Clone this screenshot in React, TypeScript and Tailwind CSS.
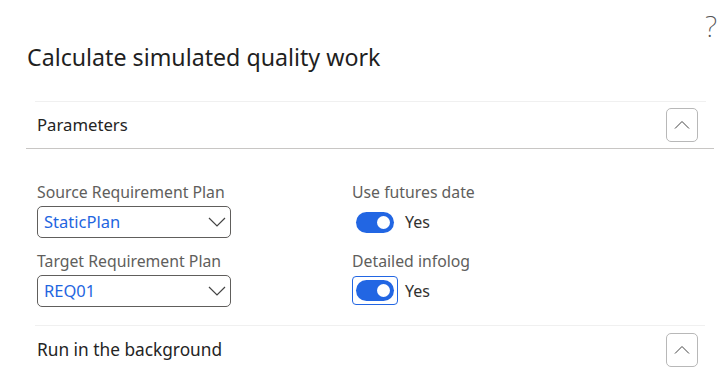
import type { ReactNode } from "react";

const font = { fontFamily: '"Segoe UI", "Noto Sans", "Open Sans", sans-serif' };

function CollapseButton() {
  return (
    <button className="w-[32px] h-[34px] rounded-[5px] border border-[#b8b8b8] bg-white flex items-center justify-center">
      <svg width="16" height="10" viewBox="0 0 16 10" fill="none">
        <path d="M1 8.5 L8 1.5 L15 8.5" stroke="#444" strokeWidth="1" />
      </svg>
    </button>
  );
}

function Select({ value }: { value: string }) {
  return (
    <div className="w-[194px] h-[32px] rounded-[5px] border border-[#605e5c] flex items-center justify-between pl-[6px] pr-[4px]">
      <span className="text-[16.5px] text-[#1f66e0] leading-none">{value}</span>
      <svg width="18" height="10" viewBox="0 0 18 10" fill="none">
        <path d="M1 1 L9 9 L17 1" stroke="#444" strokeWidth="1.2" />
      </svg>
    </div>
  );
}

function Toggle({ focused }: { focused?: boolean }) {
  return (
    <div
      className={`flex items-center ${
        focused ? "border border-[#2266e3] rounded-[4px] p-[3px] -ml-[4px]" : ""
      }`}
    >
      <div className="w-[38px] h-[21px] rounded-full bg-[#2266e3] flex items-center justify-end pr-[4px]">
        <div className="w-[13px] h-[13px] rounded-full bg-white" />
      </div>
    </div>
  );
}

function Field({ label, children }: { label: string; children: ReactNode }) {
  return (
    <div className="flex flex-col">
      <div className="text-[15.8px] leading-[20px] text-[#605e5c]">{label}</div>
      <div className="mt-[4px]">{children}</div>
    </div>
  );
}

export default function App() {
  return (
    <div className="w-[718px] h-[374px] overflow-hidden bg-white text-[#242424]" style={font}>
      <div className="h-[42px] flex justify-end items-start pt-[10px] pr-[1px]">
        <span className="text-[29px] leading-[32px] font-extralight text-[#555]">?</span>
      </div>

      <h1 className="pl-[27px] text-[23.2px] leading-[30px] text-[#1f1f1f]">Calculate simulated quality work</h1>

      <div className="mt-[29px] ml-[26px] w-[688px]">
        <div className="ml-[9px] mr-[8px] border-t border-[#f0f0f0]" />
        <div className="h-[47px] flex items-center justify-between pl-[11px] pr-[16px] border-b border-[#c8c6c4]">
          <span className="text-[16.7px] text-[#242424]">Parameters</span>
          <CollapseButton />
        </div>

        <div className="pl-[11px] pt-[33px] pb-[18px] flex">
          <div className="w-[315px] flex flex-col gap-[13px]">
            <Field label="Source Requirement Plan">
              <Select value="StaticPlan" />
            </Field>
            <Field label="Target Requirement Plan">
              <Select value="REQ01" />
            </Field>
          </div>
          <div className="flex flex-col">
            <Field label="Use futures date">
              <div className="flex items-center gap-[11px] pl-[4px] h-[32px]">
                <Toggle />
                <span className="text-[16px] text-[#323130]">Yes</span>
              </div>
            </Field>
            <div className="mt-[13px]">
              <Field label="Detailed infolog">
                <div className="flex items-center gap-[7px] pl-[4px] h-[31px]">
                  <Toggle focused />
                  <span className="text-[16px] text-[#323130]">Yes</span>
                </div>
              </Field>
            </div>
          </div>
        </div>

        <div className="ml-[9px] mr-[9px] border-t border-[#f0f0f0]" />
        <div className="h-[48px] flex items-center justify-between pl-[11px] pr-[16px]">
          <span className="text-[17.3px] text-[#242424]">Run in the background</span>
          <CollapseButton />
        </div>
      </div>
    </div>
  );
}
